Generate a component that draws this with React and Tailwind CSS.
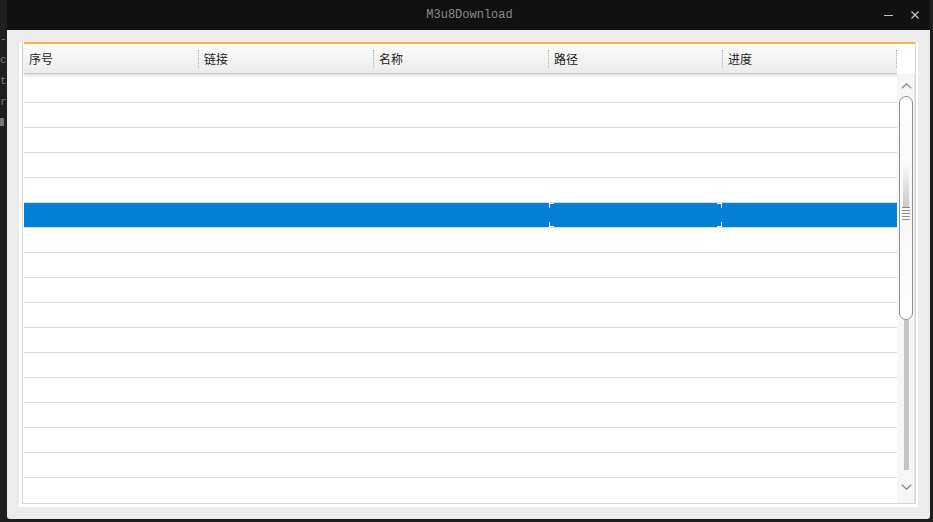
import React from "react";

const columns = [
  { name: "序号", w: "w-[175px]" },
  { name: "链接", w: "w-[175px]" },
  { name: "名称", w: "w-[175px]" },
  { name: "路径", w: "w-[174px]" },
  { name: "进度", w: "w-[174px]" },
];

const rows = Array.from({ length: 16 }, (_, i) => i);

const App = () => {
  return (
    <div className="w-[933px] h-[522px] bg-[#1e1e1e] flex overflow-hidden">
      {/* left strip of the desktop behind */}
      <div className="w-[7px] flex flex-col gap-[10px] pt-[34px] text-[#777] text-[11px] leading-none font-['Liberation_Mono',monospace]">
        <span>-</span>
        <span>c</span>
        <span>t</span>
        <span>r</span>
        <span className="w-[4px] h-[8px] bg-[#777]"></span>
      </div>

      <div className="w-[923px] h-[519px] flex flex-col rounded-b-[3px] overflow-hidden">
        {/* title bar */}
        <div className="h-[30px] bg-[#111111] grid grid-cols-[1fr_auto_1fr] items-center">
          <div></div>
          <div className="text-[12px] text-[#8a8a8a] font-['Liberation_Mono',monospace] pl-[2px]">
            M3u8Download
          </div>
          <div className="flex justify-end items-center gap-[18px] pr-[11px] text-[#c8c8c8]">
            <div className="w-[9px] h-px bg-[#c8c8c8] mt-[1px]"></div>
            <svg width="8" height="8" viewBox="0 0 8 8">
              <path d="M0.5 0.5 L7.5 7.5 M7.5 0.5 L0.5 7.5" stroke="#c8c8c8" strokeWidth="1.2" />
            </svg>
          </div>
        </div>

        {/* window body */}
        <div className="flex-1 bg-[#ececec] pt-[12px] pl-[12px] pr-[12px] pb-[12px]">
          <div className="h-[465px] bg-white pl-[3px] pr-[2px] pb-[3px]">
            <div className="h-full border-l border-r border-b border-[#d6d6d6] pl-px flex flex-col">
              <div className="h-[2px] bg-[#fbb44a]"></div>

              {/* header */}
              <div className="flex relative z-10">
                <div className="flex h-[30px] bg-gradient-to-b from-[#fbfbfb] to-[#ececec] border-b border-[#c6c6c6] shadow-[0_2px_3px_rgba(0,0,0,0.12)]">
                  {columns.map((c) => (
                    <div key={c.name} className={`${c.w} flex items-center justify-between`}>
                      <span className="pl-[5px] text-[12px] text-[#222] font-['Noto_Sans_CJK_SC',sans-serif] leading-none">
                        {c.name}
                      </span>
                      <div className="h-[18px] border-r border-dotted border-[#b0b0b0]"></div>
                    </div>
                  ))}
                </div>
                <div className="flex-1 bg-white"></div>
              </div>

              {/* body */}
              <div className="flex-1 flex">
                <div className="w-[873px] flex flex-col">
                  {rows.map((i) => (
                    <div
                      key={i}
                      className={`${i === 0 ? "h-[29px]" : "h-[25px]"} border-b border-[#dadada] flex ${
                        i === 5 ? "bg-[#0280d6]" : "bg-white"
                      }`}
                    >
                      {i === 5 &&
                        columns.map((c, ci) => (
                          <div key={c.name} className={`${c.w} flex`}>
                            {ci === 3 && (
                              <div className="flex-1 flex justify-between">
                                <div className="w-[5px] flex flex-col justify-between">
                                  <div className="h-[5px] border-l border-t border-white"></div>
                                  <div className="h-[5px] border-l border-b border-white"></div>
                                </div>
                                <div className="w-[5px] flex flex-col justify-between mr-px">
                                  <div className="h-[5px] border-r border-t border-white"></div>
                                  <div className="h-[5px] border-r border-b border-white"></div>
                                </div>
                              </div>
                            )}
                          </div>
                        ))}
                    </div>
                  ))}
                </div>

                {/* scrollbar */}
                <div className="w-[17px] bg-[#f6f6f6] flex flex-col items-center pt-[9px]">
                  <svg width="11" height="6" viewBox="0 0 11 6" className="ml-px">
                    <path d="M0.8 5.2 L5.5 0.8 L10.2 5.2" stroke="#8a8a8a" strokeWidth="1.3" fill="none" />
                  </svg>
                  <div className="mt-[7px] w-[14px] h-[224px] rounded-full border border-[#8f8f8f] bg-gradient-to-b from-white via-[#f6f6f6] to-white flex flex-col items-center pt-[105px] ml-px">
                    <div className="w-[6px] h-[45px] bg-gradient-to-b from-[#fdfdfd] to-[#c8c8c8] -mt-[40px]"></div>
                    <div className="flex flex-col gap-[2px] w-[8px]">
                      <div className="h-px bg-[#8c8c8c]"></div>
                      <div className="h-px bg-[#8c8c8c]"></div>
                      <div className="h-px bg-[#8c8c8c]"></div>
                      <div className="h-px bg-[#8c8c8c]"></div>
                      <div className="h-px bg-[#8c8c8c]"></div>
                    </div>
                  </div>
                  <div className="w-[5px] h-[150px] bg-[#c4c4c4] ml-px"></div>
                  <svg width="11" height="6" viewBox="0 0 11 6" className="mt-[14px] ml-px">
                    <path d="M0.8 0.8 L5.5 5.2 L10.2 0.8" stroke="#8a8a8a" strokeWidth="1.3" fill="none" />
                  </svg>
                </div>
                <div className="w-px bg-[#e2e2e2]"></div>
              </div>
            </div>
          </div>
        </div>
      </div>

      <div className="w-[3px]"></div>
    </div>
  );
};

export default App;
